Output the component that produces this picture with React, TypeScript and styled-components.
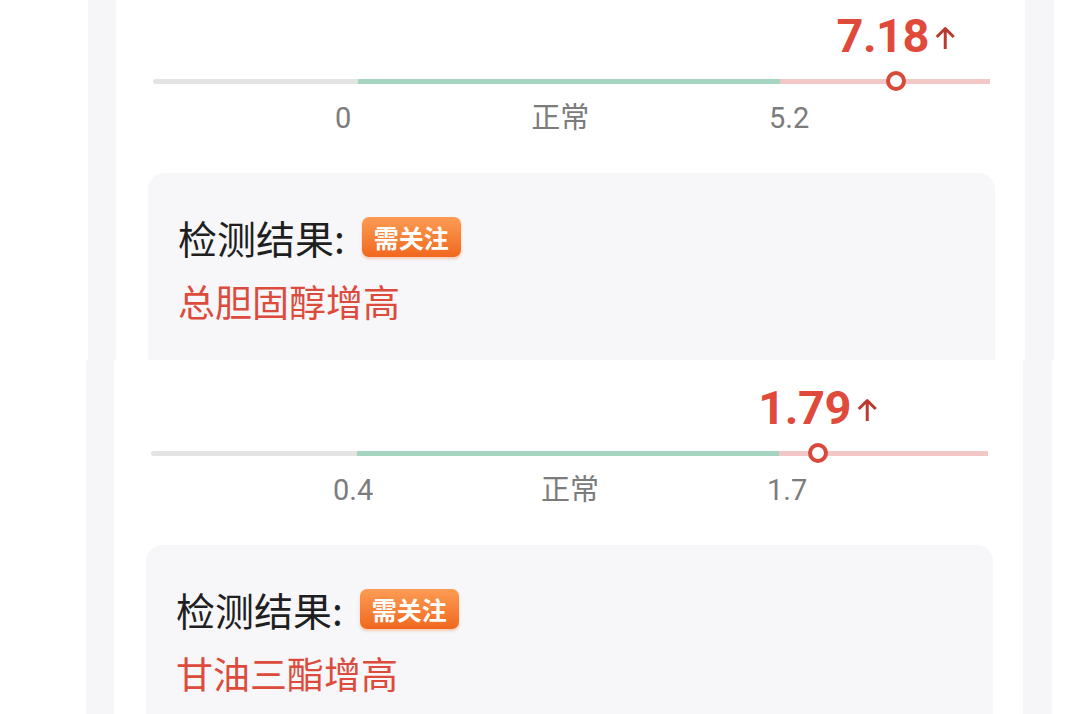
import React from "react";
import styled, { createGlobalStyle } from "styled-components";

const GlobalStyle = createGlobalStyle`
  html, body {
    margin: 0;
    padding: 0;
    background: #ffffff;
  }
  body {
    font-family: Roboto, "Noto Sans CJK SC", sans-serif;
    overflow: hidden;
  }
`;

interface Reading {
  value: string;
  low: string;
  high: string;
  marker: number;
  segments: number[];
  finding: string;
}

const readings: Reading[] = [
  {
    value: "7.18",
    low: "0",
    high: "5.2",
    marker: 88.8,
    segments: [205, 422, 210],
    finding: "总胆固醇增高",
  },
  {
    value: "1.79",
    low: "0.4",
    high: "1.7",
    marker: 79.7,
    segments: [206, 422, 209],
    finding: "甘油三酯增高",
  },
];

const segmentColors = ["#e3e3e3", "#a5d5c1", "#f3c7c6"];

function UpArrow() {
  return (
    <svg width='22' height='24' viewBox='0 0 22 24'>
      <path
        d='M11 23 V2.5 M2.5 11 L11 2.5 L19.5 11'
        fill='none'
        stroke='#b93b30'
        strokeWidth='3'
        strokeLinejoin='round'
      />
    </svg>
  );
}

function Panel({
  reading,
  top,
  height,
  shift,
}: {
  reading: Reading;
  top: number;
  height: number;
  shift: number;
}) {
  return (
    <Section $height={height} $shift={shift}>
      <Strip>
        <Card $top={top}>
          <Gauge>
            <ValueLayer>
              <Value style={{ left: `${reading.marker}%` }}>
                {reading.value}
                <UpArrow />
              </Value>
            </ValueLayer>
            <TrackWrap>
              {reading.segments.map((w, i) => (
                <Segment key={i} $color={segmentColors[i]} style={{ flexGrow: w }} />
              ))}
              <Thumb style={{ left: `${reading.marker}%` }} />
            </TrackWrap>
            <Labels>
              <Low>{reading.low}</Low>
              <Mid>正常</Mid>
              <High>{reading.high}</High>
            </Labels>
          </Gauge>
          <ResultBox>
            <ResultRow>
              <ResultTitle>检测结果:</ResultTitle>
              <Badge>需关注</Badge>
            </ResultRow>
            <Finding>{reading.finding}</Finding>
          </ResultBox>
        </Card>
      </Strip>
    </Section>
  );
}

export default function App() {
  return (
    <Page>
      <GlobalStyle />
      <Panel reading={readings[0]} top={12} height={360} shift={0} />
      <Panel reading={readings[1]} top={24} height={354} shift={-2} />
    </Page>
  );
}

const Page = styled.div`
  width: 1080px;
  height: 714px;
  overflow: hidden;
  background: #ffffff;
`;

const Section = styled.div<{ $height: number; $shift: number }>`
  height: ${({ $height }) => $height}px;
  margin-left: ${({ $shift }) => $shift}px;
  overflow: hidden;
`;

const Strip = styled.div`
  margin-left: 88px;
  width: 966px;
  height: 100%;
  box-sizing: border-box;
  padding: 0 29px 0 28px;
  background: #f6f6f8;
`;

const Card = styled.div<{ $top: number }>`
  height: 100%;
  box-sizing: border-box;
  background: #ffffff;
  padding: ${({ $top }) => $top}px 30px 0 32px;
`;

const Gauge = styled.div`
  margin: 0 5px;
`;

const ValueLayer = styled.div`
  position: relative;
  height: 47px;
`;

const Value = styled.div`
  position: absolute;
  top: 0;
  transform: translateX(-50%);
  display: flex;
  align-items: flex-end;
  gap: 5px;
  font-family: Roboto, sans-serif;
  font-weight: 700;
  font-size: 47px;
  line-height: 47px;
  letter-spacing: -0.5px;
  color: #e04a3a;
  white-space: nowrap;

  svg {
    margin-bottom: 9px;
  }
`;

const TrackWrap = styled.div`
  position: relative;
  margin-top: 12px;
  height: 20px;
  display: flex;
  align-items: center;
`;

const Segment = styled.div<{ $color: string }>`
  flex-basis: 0;
  height: 5px;
  background: ${({ $color }) => $color};

  &:first-child {
    border-radius: 3px 0 0 3px;
  }
  &:last-of-type {
    border-radius: 0 3px 3px 0;
  }
`;

const Thumb = styled.div`
  position: absolute;
  top: 0;
  width: 20px;
  height: 20px;
  box-sizing: border-box;
  border: 4px solid #d8493a;
  border-radius: 50%;
  background: #ffffff;
  transform: translateX(-50%);
`;

const Labels = styled.div`
  display: flex;
  margin: 9px 0 0 182px;
  width: 474px;
  font-size: 29px;
  line-height: 36px;
  color: #7c7c7c;
  font-family: Roboto, "Noto Sans CJK SC", sans-serif;
`;

const Low = styled.div`
  flex: none;
`;

const Mid = styled.div`
  flex: 1;
  text-align: center;
`;

const High = styled.div`
  flex: none;
  width: 40px;
`;

const ResultBox = styled.div`
  margin-top: 37px;
  height: 260px;
  box-sizing: border-box;
  padding: 40px 30px 0;
  background: #f7f7f9;
  border-radius: 16px;
`;

const ResultRow = styled.div`
  display: flex;
  align-items: center;
  height: 48px;
`;

const ResultTitle = styled.div`
  font-family: "Noto Sans CJK SC", sans-serif;
  font-size: 39px;
  line-height: 48px;
  color: #1f1f1f;
`;

const Badge = styled.div`
  margin-left: 17px;
  height: 40px;
  padding: 0 12px;
  display: flex;
  align-items: center;
  border-radius: 7px;
  background: linear-gradient(180deg, #fd9c55 0%, #f0681e 100%);
  box-shadow: 0 2px 3px rgba(240, 104, 30, 0.3);
  color: #ffffff;
  font-family: "Noto Sans CJK SC", sans-serif;
  font-weight: 700;
  font-size: 25px;
`;

const Finding = styled.div`
  margin-top: 16px;
  font-family: "Noto Sans CJK SC", sans-serif;
  font-size: 37px;
  line-height: 48px;
  color: #dd4b3c;
`;
